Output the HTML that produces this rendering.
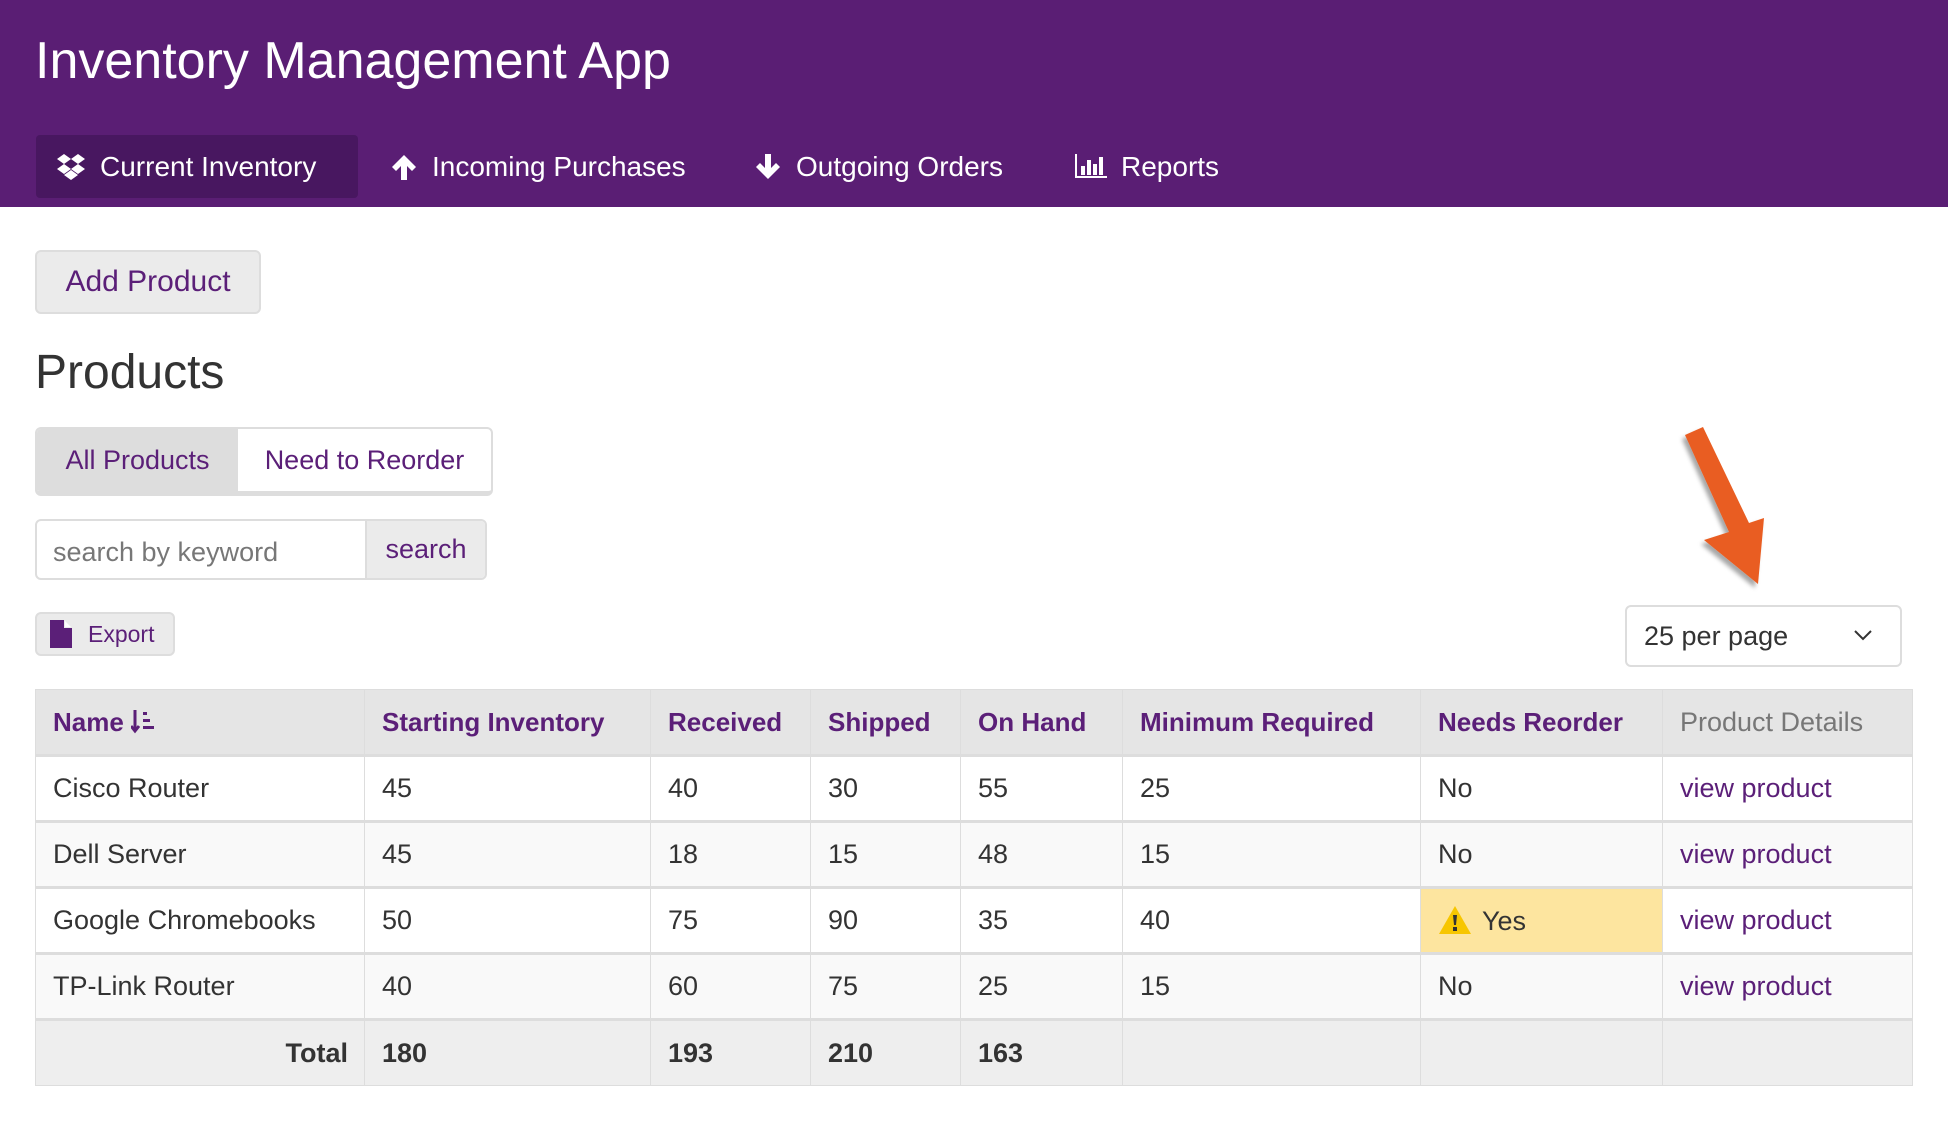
<!DOCTYPE html>
<html><head><meta charset="utf-8"><style>
*{box-sizing:border-box;margin:0;padding:0}
body{width:1948px;height:1122px;background:#fff;font-family:"Liberation Sans",sans-serif;color:#333;position:relative;overflow:hidden}
.hdr{position:absolute;left:0;top:0;width:1948px;height:207px;background:#5a1e74}
.title{position:absolute;left:35px;top:31px;font-size:52px;color:#fff;font-weight:normal}
.nav{position:absolute;top:135px;height:63px;color:#fff;font-size:28px;line-height:63px;display:flex;align-items:center}
.nav svg{margin-right:14px}
.act{left:36px;width:322px;background:#481760;border-radius:4px;padding-left:20px}
.btn{position:absolute;background:#ebebeb;border:2px solid #ddd;border-radius:6px;color:#5b1f78}
.pur{color:#5b1f78}
table{position:absolute;left:35px;top:689px;width:1878px;border-collapse:collapse;font-size:27px}
td,th{border:1px solid #ddd;height:66px;padding:0 17px;text-align:left;font-weight:normal}
th{background:#e5e5e5;color:#5b1f78;font-weight:bold;border-bottom:3px solid #ddd;font-size:26px}
tr.r td{border-bottom:3px solid #ddd}
tr.a td{background:#fff}
tr.b td{background:#f9f9f9}
tr.t td{background:#eee;font-weight:bold;color:#333}
</style></head><body>
<div class="hdr">
<div class="title">Inventory Management App</div>
<div class="nav act"><svg width="30" height="28" viewBox="0 0 30 28"><path d="M8 1L1 6l7 5 7-5zM22 1l-7 5 7 5 7-5zM8 11l-7 5 7 5 7-5zM22 11l-7 5 7 5 7-5zM15 17l-7 5 7 5 7-5z" fill="#fff"/></svg>Current Inventory</div>
<div class="nav" style="left:390px"><svg width="28" height="28" viewBox="0 0 28 28"><path d="M14 2L2 14l4 4 5-5v14h6V13l5 5 4-4z" fill="#fff"/></svg>Incoming Purchases</div>
<div class="nav" style="left:754px"><svg width="28" height="28" viewBox="0 0 28 28"><path d="M14 26L2 14l4-4 5 5V1h6v14l5-5 4 4z" fill="#fff"/></svg>Outgoing Orders</div>
<div class="nav" style="left:1073px"><svg width="34" height="26" viewBox="0 0 34 26"><path d="M2 0v24h32v-2H4V0zM8 12h4v9H8zM14 6h4v15h-4zM20 10h4v11h-4zM26 3h4v18h-4z" fill="#fff"/></svg>Reports</div>
</div>

<div class="btn" style="left:35px;top:250px;width:226px;height:64px;font-size:30px;line-height:60px;text-align:center">Add Product</div>
<div style="position:absolute;left:35px;top:345px;font-size:48px;color:#333">Products</div>

<div style="position:absolute;left:35px;top:427px;width:458px;height:69px;border:2px solid #ddd;border-bottom-width:5px;border-radius:6px;overflow:hidden;display:flex;font-size:27px;line-height:62px">
<div class="pur" style="width:201px;background:#ddd;text-align:center">All Products</div>
<div class="pur" style="flex:1;text-align:center">Need to Reorder</div>
</div>

<div style="position:absolute;left:35px;top:519px;width:452px;height:61px;border:2px solid #ddd;border-radius:6px;overflow:hidden;display:flex;font-size:27px;line-height:57px">
<div style="width:328px;color:#777;padding-left:16px;line-height:62px">search by keyword</div>
<div class="pur" style="flex:1;background:#ebebeb;border-left:2px solid #ddd;text-align:center">search</div>
</div>

<div class="btn" style="left:35px;top:612px;width:140px;height:44px;font-size:23px;line-height:40px;padding-left:13px;display:flex;align-items:center"><svg width="22" height="28" viewBox="0 0 22 28" style="margin-right:16px"><path d="M0 0h14l8 8v20H0zM14 0v8h8z" fill="#5b1f78"/><path d="M15 1v6h6" fill="#fff"/></svg>Export</div>

<svg style="position:absolute;left:0;top:0" width="1948" height="700" viewBox="0 0 1948 700"><defs><filter id="s"><feDropShadow dx="-3" dy="4" stdDeviation="2" flood-opacity="0.35"/></filter></defs><path d="M1685 435L1703 427L1749 523L1764 518L1758 584L1704 540L1729 532Z" fill="#e95d20" filter="url(#s)"/></svg>

<div style="position:absolute;left:1625px;top:605px;width:277px;height:62px;border:2px solid #ddd;border-radius:6px;font-size:27px;line-height:58px;padding-left:17px;color:#333">25 per page<svg style="position:absolute;right:28px;top:22px" width="18" height="12" viewBox="0 0 18 12"><path d="M1 2l8 8 8-8" stroke="#333" stroke-width="2" fill="none"/></svg></div>

<table>
<colgroup><col style="width:329px"><col style="width:286px"><col style="width:160px"><col style="width:150px"><col style="width:162px"><col style="width:298px"><col style="width:242px"><col></colgroup>
<tr><th>Name&nbsp;<svg width="26" height="26" viewBox="0 0 26 26" style="vertical-align:-4px"><path d="M4 1v20M0 17l4 5 4-5" stroke="#5b1f78" stroke-width="3" fill="none"/><path d="M12 3h4v3h-4zM12 10h7v3h-7zM12 17h11v3H12z" fill="#5b1f78"/></svg></th><th>Starting Inventory</th><th>Received</th><th>Shipped</th><th>On Hand</th><th>Minimum Required</th><th>Needs Reorder</th><th style="color:#777;font-weight:normal;font-size:27px">Product Details</th></tr>
<tr class="a r"><td>Cisco Router</td><td>45</td><td>40</td><td>30</td><td>55</td><td>25</td><td>No</td><td class="pur">view product</td></tr>
<tr class="b r"><td>Dell Server</td><td>45</td><td>18</td><td>15</td><td>48</td><td>15</td><td>No</td><td class="pur">view product</td></tr>
<tr class="a r"><td>Google Chromebooks</td><td>50</td><td>75</td><td>90</td><td>35</td><td>40</td><td style="background:#fde59f"><svg width="34" height="30" viewBox="0 0 34 30" style="vertical-align:-5px;margin-right:10px"><path d="M17 1L1 29h32z" fill="#f7c600"/><path d="M15 10h4l-1 10h-2zM15 22h4v4h-4z" fill="#333"/></svg>Yes</td><td class="pur">view product</td></tr>
<tr class="b r"><td>TP-Link Router</td><td>40</td><td>60</td><td>75</td><td>25</td><td>15</td><td>No</td><td class="pur">view product</td></tr>
<tr class="t"><td style="text-align:right;padding-right:16px">Total</td><td>180</td><td>193</td><td>210</td><td>163</td><td></td><td></td><td></td></tr>
</table>
</body></html>
